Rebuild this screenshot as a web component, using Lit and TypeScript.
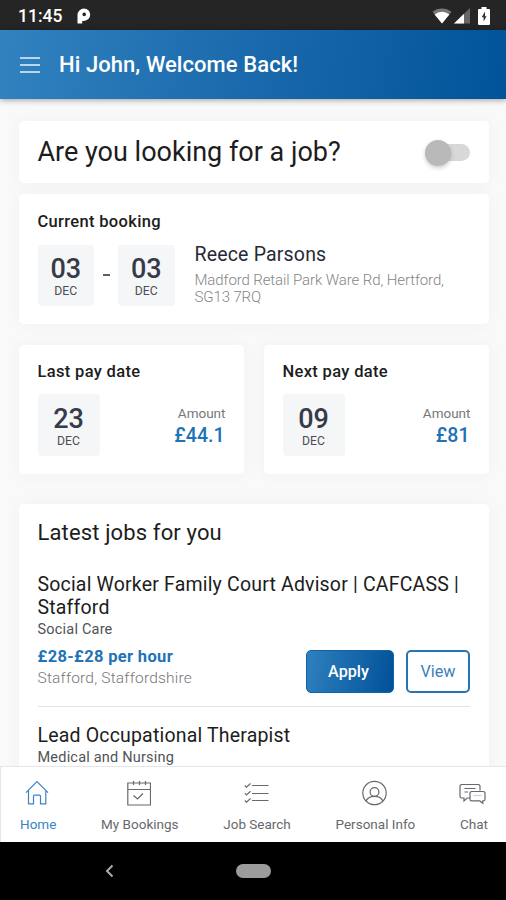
import { LitElement, html, css, svg } from "lit";
import { customElement, property } from "lit/decorators.js";

@customElement("date-tile")
class DateTile extends LitElement {
  @property() day = "";
  @property() month = "";
  static styles = css`
    :host { display: flex; flex-direction: column; align-items: center; box-sizing: border-box;
      width: 56.5px; height: 61px; padding-top: 9px; background: #f5f6f7; border-radius: 4px; }
    :host([wide]) { width: 62px; height: 62px; padding-top: 10px; }
    .day { font-size: 27px; line-height: 30px; font-weight: 500; color: #353b47; }
    .month { font-size: 12.2px; line-height: 14px; color: #4c4e53; }
  `;
  render() {
    return html`<div class="day">${this.day}</div><div class="month">${this.month}</div>`;
  }
}

const icons: Record<string, unknown> = {
  home: svg`<svg width="24" height="26" viewBox="0 0 24 26"><path d="M1 12.700 12 1.700 23 12.700M3.500 10.500v13.300h5v-7.600q0-1 1-1h5q1 0 1 1v7.600h5.300V10.500"/></svg>`,
  bookings: svg`<svg width="24" height="26" viewBox="0 0 24 26"><path d="M.8 3h22.700v22H.8zM.8 9.500h22.700M6.500 1v4M12.500 1v4M18.500 1v4M6.500 15.500l4 3.500 5.500-5.500"/></svg>`,
  search: svg`<svg width="25" height="26" viewBox="0 0 25 26"><path d="M8 5.500h16.500M8 13.500h16.500M8 20.500h16.500M.8 5.500l1.700 1.700 4-3.700M.8 13.200l1.700 1.700 4-3.700M.8 20.500l1.700 1.700 4-3.700"/></svg>`,
  person: svg`<svg width="25" height="26" viewBox="0 0 25 26"><circle cx="12.500" cy="13" r="11.700"/><circle cx="12.500" cy="12" r="4.400"/><path d="M4 21c1.500-3 4.500-4.600 8.500-4.600s7 1.600 8.500 4.600"/></svg>`,
  chat: svg`<svg width="27" height="26" viewBox="0 0 27 26"><path d="M10.500 18H8.300L5 21v-3H2.700A1.700 1.700 0 0 1 1 16.300V6.200a1.700 1.700 0 0 1 1.700-1.700h16.600A1.700 1.700 0 0 1 21 6.200V10.500M5.500 8.500h11M5.500 12h3.500M12.700 11.500h11.600a1.700 1.700 0 0 1 1.700 1.700v6a1.700 1.700 0 0 1-1.700 1.700h-.5v2.300l-3-2.300h-8.100a1.700 1.700 0 0 1-1.700-1.700v-6a1.700 1.700 0 0 1 1.700-1.700z"/><path class="faint" d="M14.500 15.500h8"/></svg>`,
};

const tabs = [
  ["home", "Home"],
  ["bookings", "My Bookings"],
  ["search", "Job Search"],
  ["person", "Personal Info"],
  ["chat", "Chat"],
];

@customElement("app-root")
class AppRoot extends LitElement {
  static styles = css`
    :host { display: flex; flex-direction: column; width: 506px; height: 900px; overflow: hidden;
      background: #f9f9f9; font-family: Roboto, "Liberation Sans", sans-serif; color: #1c1d20; }
    * { box-sizing: border-box; }
    .status { flex: none; height: 30px; background: #252525; color: #fff; display: flex; align-items: center;
      padding: 1px 16px 0 18px; }
    .clock { font-size: 17.5px; font-weight: 500; }
    .status svg { display: block; }
    .pnote { margin-left: 15px; }
    .signals { display: flex; align-items: center; margin-left: auto; }
    .wifi { margin-right: 2px; }
    .cell { margin-right: 8px; }
    .header { flex: none; height: 69px; display: flex; align-items: center; gap: 19px; padding-left: 20px; z-index: 1;
      background: linear-gradient(97deg, #3182bf, #1a69ac 50%, #01549a); box-shadow: 0 1px 6px rgba(0,0,0,.38); color: #fff; }
    .burger { width: 20px; height: 16px; display: flex; flex-direction: column; justify-content: space-between; }
    .bar { height: 2px; background: #b8d7ee; }
    .title { font-size: 22px; font-weight: 500; letter-spacing: .07px; }
    .content { flex: 1; min-height: 0; overflow: hidden; padding: 22px 17px 0 19px; }
    .card { background: #fff; border-radius: 5px; box-shadow: 0 0 18px rgba(0,0,0,.035); }
    .seek { height: 62px; display: flex; align-items: center; justify-content: space-between; padding: 0 19px 0 18.5px; }
    .question { font-size: 27px; margin-top: -1px; }
    .toggle { width: 45px; height: 27px; display: flex; align-items: center; position: relative; }
    .track { width: 36px; height: 17px; margin-left: auto; border-radius: 9px; background: #d8d8d8; }
    .knob { position: absolute; left: 0; top: 1px; width: 26px; height: 26px; border-radius: 50%; background: #b9b9b9;
      box-shadow: 0 2px 4px rgba(0,0,0,.2); }
    .booking { margin-top: 11px; height: 130px; padding: 18px 19px 0 18.5px; }
    .label { font-size: 16.5px; line-height: 20px; font-weight: 500; letter-spacing: .33px; }
    .when { display: flex; margin-top: 13px; }
    .dash { width: 24px; display: flex; justify-content: center; padding-top: 29px; }
    .dash-line { width: 7px; height: 2px; background: #5b5f68; }
    .place { margin-left: 20px; }
    .name { font-size: 19.5px; line-height: 20px; color: #262a35; letter-spacing: .18px; }
    .address { font-size: 15px; line-height: 17px; font-weight: 300; color: #858585; margin-top: 7px; letter-spacing: -.11px; }
    .pays { display: grid; grid-template-columns: 225px 225px; gap: 20px; margin-top: 21px; }
    .pay { height: 129px; padding: 17px 18.5px 0 18.5px; }
    .payrow { display: flex; justify-content: space-between; margin-top: 12px; }
    .amount { text-align: right; padding-top: 10px; }
    .caption { font-size: 13.5px; line-height: 18px; color: #777; }
    .sum { font-size: 19.5px; line-height: 24px; color: #1d72b8; font-weight: 500; padding: 2px 1px 0 0; }
    .jobs { margin-top: 30px; padding: 16px 19px 0 18.5px; height: 300px; }
    .heading { font-size: 22px; line-height: 26px; letter-spacing: .14px; }
    .job { font-size: 19.5px; line-height: 22.5px; letter-spacing: .18px; white-space: nowrap; }
    .first { margin-top: 28px; }
    .second { margin-top: 17.5px; }
    .field { font-size: 14.5px; line-height: 20px; color: #505256; letter-spacing: .2px; padding-top: 1px; }
    .foot { display: flex; align-items: flex-start; margin-top: 7px; height: 60px; border-bottom: 1px solid #e2e2e2; }
    .rate { font-size: 16.5px; line-height: 20px; font-weight: 700; color: #2173b6; letter-spacing: .33px; }
    .where { font-size: 15.5px; line-height: 20px; font-weight: 300; color: #777; letter-spacing: .19px; padding-top: 1px; }
    .btn { height: 43px; margin-top: 3px; border-radius: 5px; display: flex; align-items: center; justify-content: center; font-size: 16.2px; }
    .apply { margin-left: auto; width: 88px; color: #fff; background: linear-gradient(100deg, #2f80bd, #01519a);
      border: 1px solid #0f62a6; padding: 0 3px 1px 0; font-weight: 500; }
    .view { margin-left: 12px; width: 64px; color: #3a7fba; border: 2px solid #2575b4; }
    .nav { flex: none; height: 76px; background: #fff; border-top: 1px solid #e6e6e6; border-left: 1px solid #e6e6e6; display: flex; justify-content: space-between;
      padding: 11px 18px 0 19px; }
    .tab { display: flex; flex-direction: column; align-items: center; color: #66696d; }
    .icon { height: 30px; display: flex; align-items: center; margin-left: -2px; }
    .icon svg { fill: none; stroke: currentColor; stroke-width: 1.2; display: block; }
    .faint { opacity: .3; }
    .tab-label { font-size: 13.5px; line-height: 16px; margin-top: 8px; white-space: nowrap; }
    .tab.active { color: #3a84c6; }
    .system { flex: none; height: 58px; background: #000; display: grid; grid-template-columns: 105px 131px 34px; align-items: center; }
    .back { grid-column: 2; }
    .pill { width: 35px; height: 14px; border-radius: 7px; background: #9c9c9c; }
  `;

  render() {
    return html`
      <div class="status">
        <span class="clock">11:45</span>
        <svg class="pnote" width="14" height="16" viewBox="0 0 14 16"><path fill="#fff" fill-rule="evenodd" d="M.500 15.500V7A6.500 6.500 0 0 1 7 .5a6.200 6.200 0 0 1 0 12.400H5.200v2.600zM7.200 4.600a1.800 1.800 0 1 0 0 3.600 1.800 1.800 0 1 0 0-3.600z"/></svg>
        <div class="signals">
          <svg class="wifi" width="20" height="16" viewBox="0 0 20 16"><path fill="#777" d="M10 15.500.500 3.800a15 15 0 0 1 19 0z"/><path fill="#fff" d="M10 15.500 2.600 6.400a11.500 11.500 0 0 1 14.800 0z"/></svg>
          <svg class="cell" width="16" height="16" viewBox="0 0 16 16"><path fill="#666" d="M0 15.500 16 0v15.500z"/><path fill="#fff" d="M0 15.500 10 5.800v9.700z"/></svg>
          <svg width="12" height="18" viewBox="0 0 12 18"><path fill="#fff" d="M3.500 0h5v2H11a1 1 0 0 1 1 1v14a1 1 0 0 1-1 1H1a1 1 0 0 1-1-1V3a1 1 0 0 1 1-1h2.500z"/><path fill="#333" d="M7 4.500 3.700 10.300h1.900V14.500l3-5.300H7z"/></svg>
        </div>
      </div>
      <div class="header">
        <div class="burger"><div class="bar"></div><div class="bar"></div><div class="bar"></div></div>
        <div class="title">Hi John, Welcome Back!</div>
      </div>
      <div class="content">
        <div class="card seek">
          <div class="question">Are you looking for a job?</div>
          <div class="toggle"><div class="track"></div><div class="knob"></div></div>
        </div>
        <div class="card booking">
          <div class="label">Current booking</div>
          <div class="when">
            <date-tile day="03" month="DEC"></date-tile>
            <div class="dash"><div class="dash-line"></div></div>
            <date-tile day="03" month="DEC"></date-tile>
            <div class="place">
              <div class="name">Reece Parsons</div>
              <div class="address">Madford Retail Park Ware Rd, Hertford,<br>SG13 7RQ</div>
            </div>
          </div>
        </div>
        <div class="pays">
          ${[["Last pay date", "23", "£44.1"], ["Next pay date", "09", "£81"]].map(([label, day, sum]) => html`
            <div class="card pay">
              <div class="label">${label}</div>
              <div class="payrow">
                <date-tile wide day=${day} month="DEC"></date-tile>
                <div class="amount"><div class="caption">Amount</div><div class="sum">${sum}</div></div>
              </div>
            </div>`)}
        </div>
        <div class="card jobs">
          <div class="heading">Latest jobs for you</div>
          <div class="job first">Social Worker Family Court Advisor | CAFCASS |<br>Stafford</div>
          <div class="field">Social Care</div>
          <div class="foot">
            <div><div class="rate">£28-£28 per hour</div><div class="where">Stafford, Staffordshire</div></div>
            <div class="btn apply">Apply</div>
            <div class="btn view">View</div>
          </div>
          <div class="job second">Lead Occupational Therapist</div>
          <div class="field">Medical and Nursing</div>
        </div>
      </div>
      <div class="nav">
        ${tabs.map(([icon, label], i) => html`
          <div class="tab ${i === 0 ? "active" : ""}"><div class="icon">${icons[icon]}</div><div class="tab-label">${label}</div></div>`)}
      </div>
      <div class="system">
        <svg class="back" width="9" height="14" viewBox="0 0 9 14"><path d="M7.500 1.500 2 7l5.500 5.500" fill="none" stroke="#aaa" stroke-width="2"/></svg>
        <div class="pill"></div>
      </div>
    `;
  }
}
